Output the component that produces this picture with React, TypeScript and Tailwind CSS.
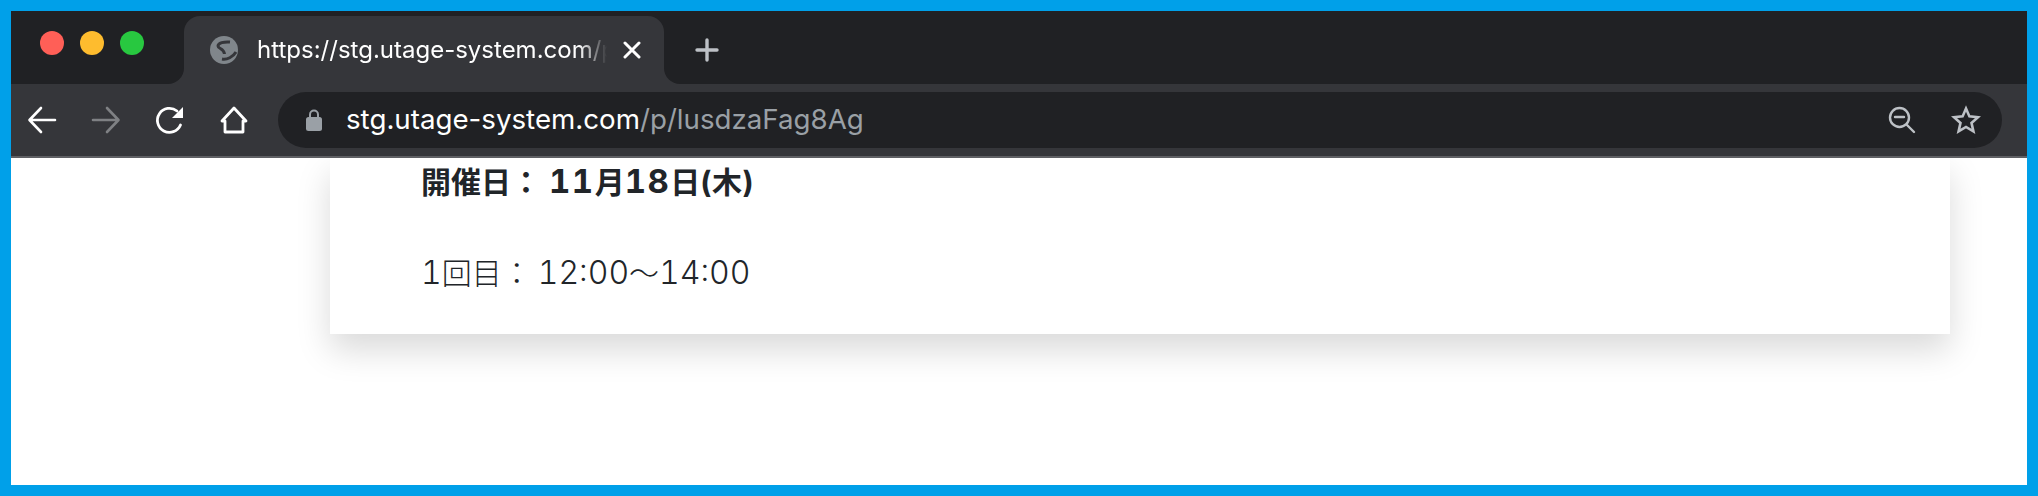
import React from 'react';

// Chrome window chrome, drawn by hand
const GlobeIcon = () => (
  <svg width="30" height="30" viewBox="0 0 30 30" fill="none" className="shrink-0">
    <circle cx="15" cy="15" r="14" fill="#80868b" />
    <path d="M21 7 C15 6.5 9 8 9 11 C9 14 15 13 15.5 19" stroke="#35363a" strokeWidth="3" />
    <path d="M13 24 C18 25 24 22 27 17" stroke="#35363a" strokeWidth="3" />
  </svg>
);

const BackIcon = ({ color }: { color: string }) => (
  <svg width="30" height="30" viewBox="0 0 30 30" fill="none" stroke={color} strokeWidth="2.6" strokeLinecap="round" strokeLinejoin="round">
    <path d="M28 15 H3 M14 3 L2.5 15 L14 27" />
  </svg>
);

const ForwardIcon = ({ color }: { color: string }) => (
  <svg width="30" height="30" viewBox="0 0 30 30" fill="none" stroke={color} strokeWidth="2.6" strokeLinecap="round" strokeLinejoin="round">
    <path d="M2 15 H27 M16 3 L27.5 15 L16 27" />
  </svg>
);

const ReloadIcon = () => (
  <svg width="30" height="30" viewBox="0 0 30 30" fill="none">
    <path d="M25.5 20 A12 12 0 1 1 22 6" stroke="#fff" strokeWidth="2.8" strokeLinecap="round" />
    <path d="M28 2 V13 H17 Z" fill="#fff" />
  </svg>
);

const HomeIcon = () => (
  <svg width="30" height="30" viewBox="0 0 30 30" fill="none" stroke="#fff" strokeWidth="2.8" strokeLinejoin="round" strokeLinecap="round">
    <path d="M3 16 L15 3 L27 16 H24 V27 H6 V16 Z" />
  </svg>
);

const LockIcon = () => (
  <svg width="18" height="24" viewBox="0 0 18 24" fill="none">
    <path d="M5 10 V6.5 A4 4 0 0 1 13 6.5 V10" stroke="#9aa0a6" strokeWidth="2" />
    <rect x="1" y="9" width="16" height="14" rx="2.5" fill="#9aa0a6" />
  </svg>
);

const ZoomOutIcon = () => (
  <svg width="30" height="30" viewBox="0 0 30 30" fill="none" stroke="#bdc1c6" strokeWidth="2.4" strokeLinecap="round">
    <circle cx="12.5" cy="12.5" r="9.5" />
    <path d="M8 12 H17 M20 20 L27 27" />
  </svg>
);

const StarIcon = () => (
  <svg width="30" height="30" viewBox="0 0 30 30" fill="none" stroke="#bdc1c6" strokeWidth="2.6" strokeLinejoin="miter">
    <path d="M15 3.5 L18.4 11.4 L27 12.2 L20.5 17.9 L22.4 26.3 L15 21.9 L7.6 26.3 L9.5 17.9 L3 12.2 L11.6 11.4 Z" />
  </svg>
);

const App: React.FC = () => {
  return (
    <div className="w-[2038px] h-[496px] border-[11px] border-[#00a0e9] bg-white flex flex-col overflow-hidden font-['Inter',sans-serif]">
      {/* Tab strip */}
      <div className="h-[73px] flex bg-[#35363a] shrink-0">
        <div className="w-[173px] bg-[#202124] rounded-br-[16px] flex items-start gap-[16px] pl-[29px] pt-[20px]">
          <span className="w-[24px] h-[24px] rounded-full bg-[#ff5f57]" />
          <span className="w-[24px] h-[24px] rounded-full bg-[#febc2e]" />
          <span className="w-[24px] h-[24px] rounded-full bg-[#28c840]" />
        </div>
        <div className="w-[480px] bg-[#202124] pt-[5px]">
          <div className="h-full bg-[#35363a] rounded-t-[16px] flex items-center pl-[25px]">
            <GlobeIcon />
            <span className="ml-[18px] w-[350px] overflow-hidden whitespace-nowrap text-[24px] text-white [mask-image:linear-gradient(to_right,black_92%,transparent)]">
              https://stg.utage-system.com/p/lusdzaFag8Ag
            </span>
            <svg width="18" height="18" viewBox="0 0 18 18" className="ml-[16px]" stroke="#fff" strokeWidth="3" strokeLinecap="round">
              <path d="M2 2 L16 16 M16 2 L2 16" />
            </svg>
          </div>
        </div>
        <div className="flex-1 bg-[#202124] rounded-bl-[16px] pl-[31px] pt-[27px]">
          <svg width="24" height="24" viewBox="0 0 24 24" stroke="#bdc1c6" strokeWidth="3.4" strokeLinecap="round">
            <path d="M12 2 V22 M2 12 H22" />
          </svg>
        </div>
      </div>

      {/* Toolbar */}
      <div className="h-[74px] shrink-0 bg-[#35363a] border-b-2 border-[#5f6064] flex items-center pl-[16px] pr-[25px]">
        <div className="flex items-center gap-[34px]">
          <BackIcon color="#ffffff" />
          <ForwardIcon color="#7f8184" />
          <ReloadIcon />
          <HomeIcon />
        </div>
        <div className="ml-[29px] flex-1 h-[56px] rounded-full bg-[#202124] flex items-center pl-[27px] pr-[21px]">
          <LockIcon />
          <span className="ml-[23px] text-[27.7px] text-white whitespace-nowrap">
            stg.utage-system.com<span className="text-[#9aa0a6]">/p/lusdzaFag8Ag</span>
          </span>
          <div className="ml-auto flex items-center gap-[34px]">
            <ZoomOutIcon />
            <StarIcon />
          </div>
        </div>
      </div>

      {/* Page content */}
      <div className="flex-1 overflow-hidden pl-[319px] pr-[77px]">
        <div className="h-[176px] bg-white shadow-[0_16px_32px_rgba(0,0,0,0.15)] pl-[91px] pt-[3px] text-[#212529] tabular-nums font-['Inter','Noto_Sans_CJK_JP',sans-serif]">
          <p className="text-[30px] font-bold leading-[40px]">
            開催日：<span className="ml-[8px] text-[33px] tracking-[1.5px]">11</span>月<span className="text-[33px] tracking-[1.5px]">18</span>日(木)
          </p>
          <p className="mt-[51px] text-[30px] font-light leading-[40px]">
            <span className="text-[32px]">1</span>回目：<span className="ml-[6px] text-[32px]">12:00</span>〜<span className="text-[32px]">14:00</span>
          </p>
        </div>
      </div>
    </div>
  );
};

export default App;
